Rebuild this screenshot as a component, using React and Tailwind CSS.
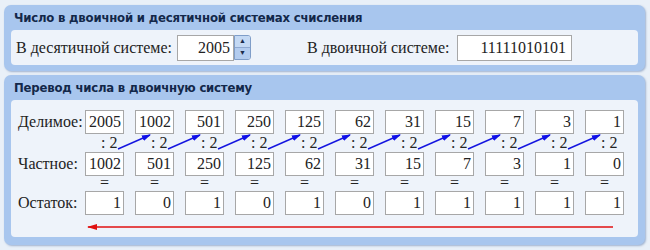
import React from 'react';

const dividends = [2005, 1002, 501, 250, 125, 62, 31, 15, 7, 3, 1];
const quotients = [1002, 501, 250, 125, 62, 31, 15, 7, 3, 1, 0];
const remainders = [1, 0, 1, 0, 1, 0, 1, 1, 1, 1, 1];

const Box = ({ value }) => (
  <div className="w-[39px] h-[24px] bg-white border border-[#a7a7a7] text-right pr-[2px] text-[16px] leading-[22px] text-[#222]">
    {value}
  </div>
);

const Panel = ({ title, children, bottom }) => (
  <div className={`rounded-[7px] bg-[#a8c6ee] px-[7px] ${bottom} shadow-[1px_1px_2px_rgba(90,120,170,0.5)]`}>
    <div className="h-[25px] leading-[25px] pl-[3px] text-[13px] tracking-[-0.2px] font-bold text-[#13284a] font-[family-name:DejaVu_Sans_Condensed,DejaVu_Sans,sans-serif]">
      {title}
    </div>
    {children}
  </div>
);

// blue arrows between the ":2" marks and the next dividend, red arrow under the remainders
const Arrows = () => (
  <svg className="absolute left-0 top-0 pointer-events-none" width="640" height="140">
    <defs>
      <marker id="blue" markerWidth="9" markerHeight="6" refX="8" refY="3" orient="auto" markerUnits="userSpaceOnUse">
        <path d="M0,0 L9,3 L0,6 z" fill="#1010e8" />
      </marker>
      <marker id="red" markerWidth="10" markerHeight="6" refX="9" refY="3" orient="auto" markerUnits="userSpaceOnUse">
        <path d="M0,0 L10,3 L0,6 z" fill="#e01010" />
      </marker>
    </defs>
    {dividends.slice(0, 10).map((_, i) => {
      const x = 74 + i * 50;
      return (
        <line key={i} x1={x + 33} y1={49} x2={x + 65} y2={35} stroke="#1515e0" strokeWidth="1.4" markerEnd="url(#blue)" />
      );
    })}
    <line x1="602" y1="127" x2="77" y2="127" stroke="#e01010" strokeWidth="1.4" markerEnd="url(#red)" />
  </svg>
);

const App = () => {
  return (
    <div className="w-[650px] h-[250px] bg-[#e9f0f8] pt-[5px] pl-[4px] pr-[5px] font-[family-name:Liberation_Serif,Times_New_Roman,serif]">
      <Panel title="Число в двоичной и десятичной системах счисления" bottom="pb-[6px]">
        <div className="h-[35px] rounded-[4px] bg-[#eef3fa] flex items-center pl-[5px] text-[16px] text-[#222]">
          <span className="w-[161px]">В десятичной системе:</span>
          <div className="w-[57px] h-[26px] bg-white border border-[#a7a7a7] text-right pr-[3px] leading-[24px]">2005</div>
          <div className="w-[17px] h-[25px] flex flex-col rounded-r-[3px] overflow-hidden border border-[#7f9dc8]">
            <div className="flex-1 bg-[#c4d9f4] flex items-center justify-center text-[7px] leading-none text-[#1a2a4a]">▲</div>
            <div className="flex-1 bg-[#b3ccef] flex items-center justify-center text-[7px] leading-none text-[#1a2a4a] border-t border-[#8fa9d1]">▼</div>
          </div>
          <span className="ml-[56px] w-[150px]">В двоичной системе:</span>
          <div className="w-[115px] h-[26px] bg-white border border-[#a7a7a7] text-right pr-[5px] leading-[24px]">11111010101</div>
        </div>
      </Panel>
      <div className="h-[4px]" />
      <Panel title="Перевод числа в двоичную систему" bottom="pb-[8px]">
        <div className="relative h-[137px] rounded-[4px] bg-[#eef3fa] pt-[10px] text-[16px] text-[#222]">
          <div className="flex items-center h-[24px]">
            <span className="w-[74px] pl-[7px]">Делимое:</span>
            <div className="flex gap-[11px]">
              {dividends.map((v, i) => <Box key={i} value={v} />)}
            </div>
          </div>
          <div className="flex h-[18px] pl-[74px] gap-[11px]">
            {dividends.map((_, i) => (
              <div key={i} className="w-[39px] pl-[16px] leading-[18px]">: 2</div>
            ))}
          </div>
          <div className="flex items-center h-[24px]">
            <span className="w-[74px] pl-[7px]">Частное:</span>
            <div className="flex gap-[11px]">
              {quotients.map((v, i) => <Box key={i} value={v} />)}
            </div>
          </div>
          <div className="flex h-[15px] pl-[74px] gap-[11px]">
            {quotients.map((_, i) => (
              <div key={i} className="w-[39px] text-center leading-[13px]">=</div>
            ))}
          </div>
          <div className="flex items-center h-[24px]">
            <span className="w-[74px] pl-[7px]">Остаток:</span>
            <div className="flex gap-[11px]">
              {remainders.map((v, i) => <Box key={i} value={v} />)}
            </div>
          </div>
          <Arrows />
        </div>
      </Panel>
    </div>
  );
};

export default App;
